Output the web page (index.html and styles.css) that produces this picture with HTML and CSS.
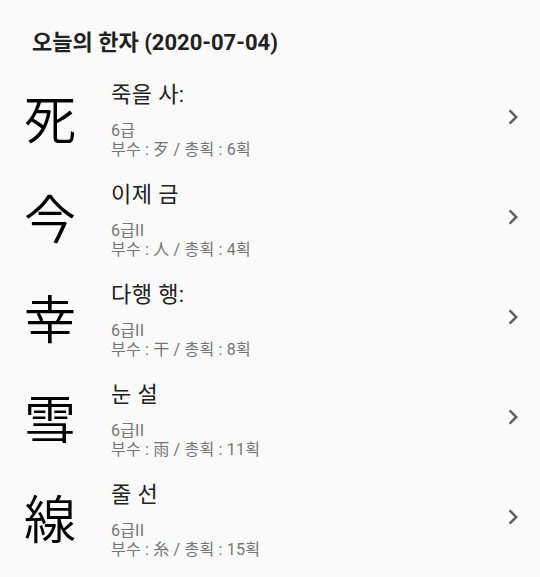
FILE: index.html
```html
<!DOCTYPE html>
<html lang="ko">
<head>
<meta charset="utf-8">
<link rel="stylesheet" href="styles.css">
</head>
<body>
<h1 class="title">오늘의 한자 (2020-07-04)</h1>
<ul class="list">
  <li class="row">
    <div class="hanja">死</div>
    <div class="info">
      <div class="name">죽을 사:</div>
      <div class="meta">6급</div>
      <div class="meta">부수 : 歹 / 총획 : 6획</div>
    </div>
    <svg class="chev" viewBox="0 0 24 24" width="30" height="30"><path d="M8.59 16.59L13.17 12 8.59 7.41 10 6l6 6-6 6z"/></svg>
  </li>
  <li class="row">
    <div class="hanja">今</div>
    <div class="info">
      <div class="name">이제 금</div>
      <div class="meta">6급II</div>
      <div class="meta">부수 : 人 / 총획 : 4획</div>
    </div>
    <svg class="chev" viewBox="0 0 24 24" width="30" height="30"><path d="M8.59 16.59L13.17 12 8.59 7.41 10 6l6 6-6 6z"/></svg>
  </li>
  <li class="row">
    <div class="hanja">幸</div>
    <div class="info">
      <div class="name">다행 행:</div>
      <div class="meta">6급II</div>
      <div class="meta">부수 : 干 / 총획 : 8획</div>
    </div>
    <svg class="chev" viewBox="0 0 24 24" width="30" height="30"><path d="M8.59 16.59L13.17 12 8.59 7.41 10 6l6 6-6 6z"/></svg>
  </li>
  <li class="row">
    <div class="hanja">雪</div>
    <div class="info">
      <div class="name">눈 설</div>
      <div class="meta">6급II</div>
      <div class="meta">부수 : 雨 / 총획 : 11획</div>
    </div>
    <svg class="chev" viewBox="0 0 24 24" width="30" height="30"><path d="M8.59 16.59L13.17 12 8.59 7.41 10 6l6 6-6 6z"/></svg>
  </li>
  <li class="row">
    <div class="hanja">線</div>
    <div class="info">
      <div class="name">줄 선</div>
      <div class="meta">6급II</div>
      <div class="meta">부수 : 糸 / 총획 : 15획</div>
    </div>
    <svg class="chev" viewBox="0 0 24 24" width="30" height="30"><path d="M8.59 16.59L13.17 12 8.59 7.41 10 6l6 6-6 6z"/></svg>
  </li>
</ul>
</body>
</html>
```
FILE: styles.css
```css
html, body {
  margin: 0;
  padding: 0;
  background: #fafafa;
}
body {
  width: 540px;
  height: 577px;
  overflow: hidden;
  font-family: Roboto, "Noto Sans CJK KR", sans-serif;
  color: #212121;
}
.title {
  margin: 0;
  padding: 29px 0 0 32px;
  height: 38px;
  font-size: 22px;
  line-height: 28px;
  font-weight: 700;
  color: #212121;
}
.list {
  list-style: none;
  margin: 0;
  padding: 0;
}
.row {
  height: 100px;
  display: flex;
  align-items: center;
}
.hanja {
  width: 100px;
  text-align: center;
  font-family: "Noto Sans CJK KR", sans-serif;
  font-size: 52px;
  line-height: 60px;
  color: #000;
  font-weight: 350;
}
.info {
  flex: 1;
  padding-left: 11px;
  padding-top: 6px;
}
.name {
  font-size: 22px;
  line-height: 28px;
  margin-bottom: 12px;
  letter-spacing: 0.4px;
  color: #212121;
}
.meta {
  font-size: 16px;
  line-height: 19px;
  letter-spacing: 0.2px;
  color: #757575;
}
.chev {
  fill: #616161;
  margin-right: 12px;
}
```
